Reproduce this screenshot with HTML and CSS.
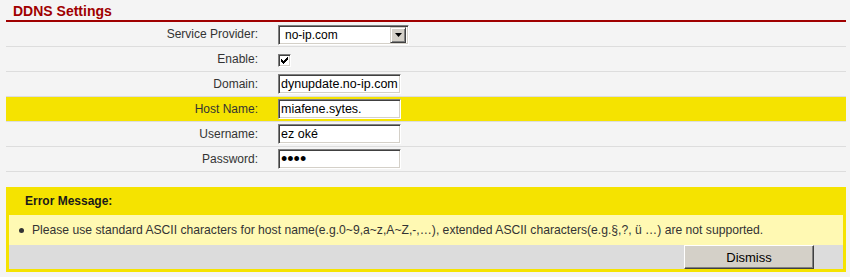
FILE: index.html
```html
<!DOCTYPE html>
<html>
<head>
   <meta charset="UTF-8">
   <title>DDNS Settings</title>
   <link rel="stylesheet" href="styles.css">
</head>
<body>
   <div class="page">
       <h1 class="title">DDNS Settings</h1>

       <div class="form">
           <div class="row">
               <label class="label">Service Provider:</label>
               <div class="field">
                   <div class="select">
                       <span class="select-value">no-ip.com</span>
                       <span class="select-arrow">
                           <svg width="7" height="4" viewBox="0 0 7 4"><path d="M0 0h7L3.5 4z" fill="#000"/></svg>
                       </span>
                   </div>
               </div>
           </div>
           <div class="row">
               <label class="label">Enable:</label>
               <div class="field">
                   <span class="checkbox">
                       <svg width="7" height="7" viewBox="0 0 7 7"><path d="M0 2h1v1h1v1h1v-1h1v-1h1v-1h1v-1h1v3h-1v1h-1v1h-1v1h-1v1h-1v-1h-1v-1h-1z" fill="#000"/></svg>
                   </span>
               </div>
           </div>
           <div class="row">
               <label class="label">Domain:</label>
               <div class="field"><input class="text-input" type="text" value="dynupdate.no-ip.com"></div>
           </div>
           <div class="row row-error">
               <label class="label">Host Name:</label>
               <div class="field"><input class="text-input" type="text" value="miafene.sytes."></div>
           </div>
           <div class="row">
               <label class="label">Username:</label>
               <div class="field"><input class="text-input" type="text" value="ez oké"></div>
           </div>
           <div class="row">
               <label class="label">Password:</label>
               <div class="field"><input class="text-input password" type="password" value="abcd"></div>
           </div>
       </div>

       <div class="error-box">
           <div class="error-head">Error Message:</div>
           <ul class="error-list">
               <li>Please use standard ASCII characters for host name(e.g.0~9,a~z,A~Z,-,…), extended ASCII characters(e.g.§,?, ü …) are not supported.</li>
           </ul>
           <div class="error-foot">
               <button class="dismiss">Dismiss</button>
           </div>
       </div>
   </div>
</body>
</html>
```

FILE: styles.css
```css
* {
    margin: 0;
    padding: 0;
    box-sizing: border-box;
}

body {
    font-family: 'Liberation Sans', Arial, sans-serif;
    font-size: 12px;
    color: #333;
    background-color: #f4f4f4;
}

.page {
    margin: 0 4px 0 6px;
}

.title {
    height: 22px;
    padding: 3px 0 0 7px;
    font-size: 14px;
    line-height: 17px;
    font-weight: bold;
    color: #a00000;
    border-bottom: 2px solid #a00000;
}

.row {
    display: grid;
    grid-template-columns: 252px 1fr;
    align-items: center;
    height: 25px;
    border-bottom: 1px solid #dddddd;
}

.row-error {
    background-color: #f5e300;
}

.label {
    text-align: right;
}

.field {
    display: flex;
    align-items: center;
    padding-left: 20px;
}

/* classic inset controls */
.select,
.text-input,
.checkbox {
    border: 1px solid;
    border-color: #808080 #fff #fff #808080;
    box-shadow: inset 1px 1px #404040, inset -1px -1px #d4d0c8;
    background: #fff;
}

.select {
    display: flex;
    align-items: center;
    width: 131px;
    height: 20px;
    margin-top: 1px;
    padding: 2px;
}

.select-value {
    flex: 1;
    padding-left: 4px;
    color: #000;
}

.select-arrow {
    display: flex;
    align-items: center;
    justify-content: center;
    width: 16px;
    height: 16px;
    background: #d4d0c8;
    border: 1px solid;
    border-color: #d4d0c8 #404040 #404040 #d4d0c8;
    box-shadow: inset 1px 1px #fff, inset -1px -1px #808080;
}

.checkbox {
    display: flex;
    align-items: center;
    justify-content: center;
    width: 13px;
    height: 13px;
    margin-top: 2px;
}

.text-input {
    width: 123px;
    height: 20px;
    padding: 0 2px;
    font-family: inherit;
    font-size: 12.5px;
    color: #000;
    outline: none;
}

.password {
    font-size: 18px;
    letter-spacing: 0;
}

.error-box {
    margin-top: 15px;
    background-color: #f5e300;
    padding: 0 3px 3px;
}

.error-head {
    height: 28px;
    line-height: 28px;
    padding-left: 16px;
    font-weight: bold;
    color: #1a1a1a;
}

.error-list {
    list-style: none;
    background-color: #fff9b3;
}

.error-list li {
    display: flex;
    align-items: center;
    height: 30px;
    padding-left: 10px;
    font-size: 12.15px;
}

.error-list li::before {
    content: '';
    width: 5px;
    height: 5px;
    margin-right: 8px;
    border-radius: 50%;
    background: #333;
}

.error-foot {
    display: flex;
    justify-content: flex-end;
    background-color: #dcdcdc;
    padding-right: 29px;
}

.dismiss {
    width: 130px;
    height: 24px;
    font-family: inherit;
    font-size: 13px;
    color: #000;
    background: #d4d0c8;
    border: 1px solid;
    border-color: #fff #404040 #404040 #fff;
    box-shadow: inset -1px -1px #808080;
    cursor: pointer;
}
```
